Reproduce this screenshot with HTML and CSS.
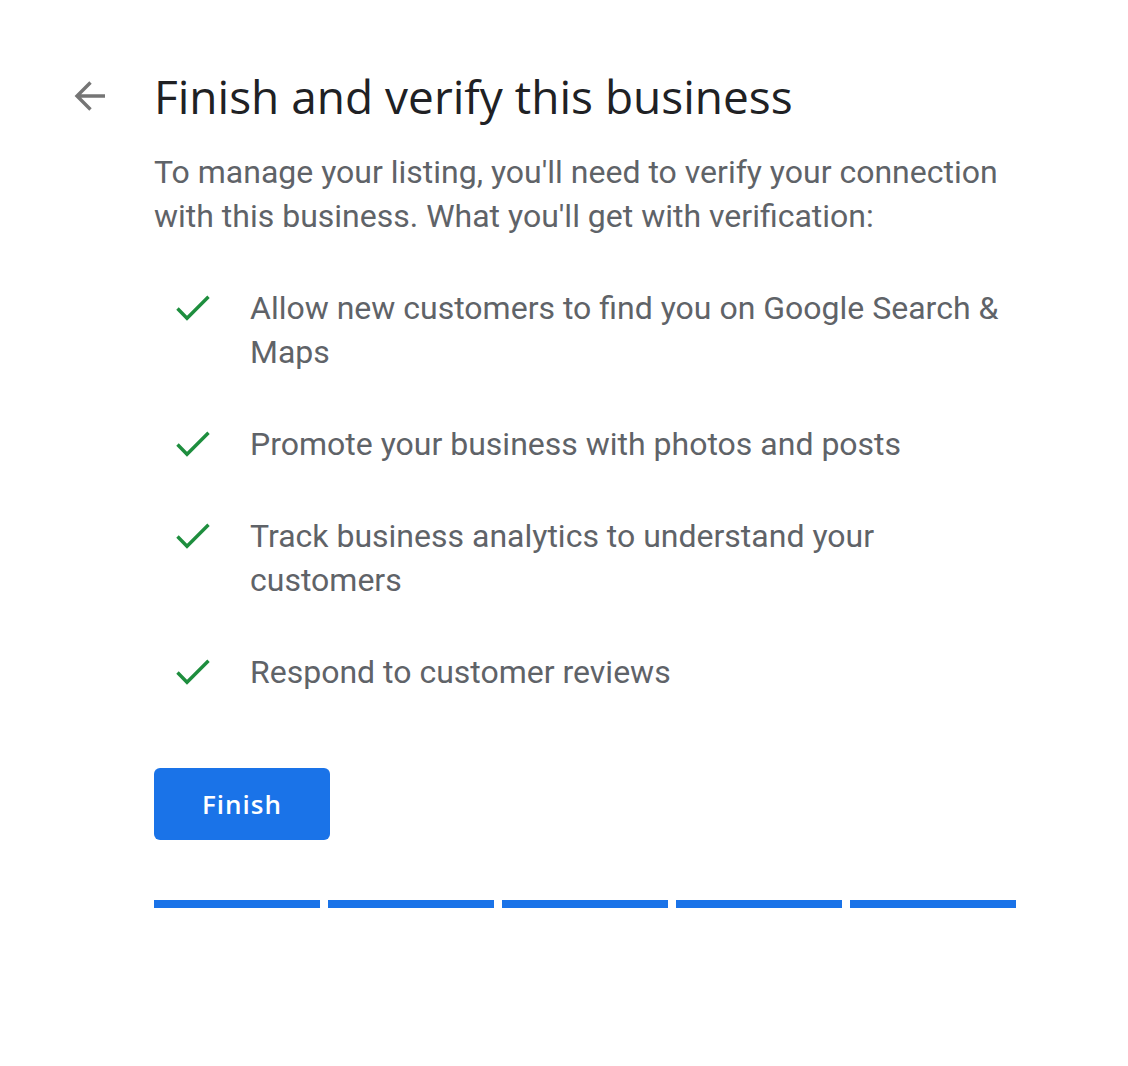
FILE: index.html
```html
<!DOCTYPE html>
<html lang="en">
<head>
  <meta charset="UTF-8">
  <title>Finish and verify this business</title>
  <link rel="stylesheet" href="styles.css">
</head>
<body>
  <div class="page">
    <!-- back arrow -->
    <button class="back" type="button" aria-label="Back">
      <svg width="32" height="32" viewBox="0 0 32 32"><path d="M31 16H3M16.5 2.5L3 16l13.5 13.5" fill="none" stroke="#757575" stroke-width="3.4"/></svg>
    </button>

    <main class="content">
      <h1 class="title">Finish and verify this business</h1>
      <p class="intro">To manage your listing, you'll need to verify your connection with this business. What you'll get with verification:</p>

      <ul class="perks">
        <li>
          <svg class="check" width="34" height="26" viewBox="0 0 34 26"><path d="M1.5 13.5l9.5 9.8L32.5 1.8" fill="none" stroke="#1e8e3e" stroke-width="3.4"/></svg>
          <span>Allow new customers to find you on Google Search &amp; Maps</span>
        </li>
        <li>
          <svg class="check" width="34" height="26" viewBox="0 0 34 26"><path d="M1.5 13.5l9.5 9.8L32.5 1.8" fill="none" stroke="#1e8e3e" stroke-width="3.4"/></svg>
          <span>Promote your business with photos and posts</span>
        </li>
        <li>
          <svg class="check" width="34" height="26" viewBox="0 0 34 26"><path d="M1.5 13.5l9.5 9.8L32.5 1.8" fill="none" stroke="#1e8e3e" stroke-width="3.4"/></svg>
          <span>Track business analytics to understand your customers</span>
        </li>
        <li>
          <svg class="check" width="34" height="26" viewBox="0 0 34 26"><path d="M1.5 13.5l9.5 9.8L32.5 1.8" fill="none" stroke="#1e8e3e" stroke-width="3.4"/></svg>
          <span>Respond to customer reviews</span>
        </li>
      </ul>

      <button class="finish" type="button">Finish</button>

      <div class="progress">
        <div class="step"></div>
        <div class="step"></div>
        <div class="step"></div>
        <div class="step"></div>
        <div class="step"></div>
      </div>
    </main>
  </div>
</body>
</html>
```

FILE: styles.css
```css
body {
  margin: 0;
  background: #fff;
  font-family: Roboto, "Liberation Sans", sans-serif;
}

.page {
  display: flex;
  align-items: flex-start;
  padding: 74px 0 0 74px;
}

.back {
  display: flex;
  width: 80px;
  padding: 0;
  margin: 6px 0 0 0;
  border: 0;
  background: none;
  cursor: pointer;
}

.content {
  width: 862px;
}

.title {
  margin: 0;
  font-family: "Open Sans", Roboto, sans-serif;
  font-weight: 400;
  font-size: 46px;
  line-height: 44px;
  color: #202124;
}

.intro {
  margin: 32px 0 0 0;
  font-size: 32px;
  line-height: 44px;
  color: #5f6368;
}

.perks {
  list-style: none;
  margin: 48px 0 0 0;
  padding: 0;
  display: flex;
  flex-direction: column;
  gap: 48px;
}

.perks li {
  display: flex;
  align-items: flex-start;
  font-size: 32px;
  line-height: 44px;
  color: #5f6368;
}

.check {
  flex: none;
  margin: 9px 40px 0 22px;
}

.finish {
  display: block;
  margin-top: 74px;
  width: 176px;
  height: 72px;
  border: 0;
  border-radius: 6px;
  background: #1a73e8;
  color: #fff;
  font-family: "Open Sans", Roboto, sans-serif;
  font-size: 26px;
  font-weight: 600;
  letter-spacing: 1px;
  cursor: pointer;
}

.progress {
  display: flex;
  gap: 8px;
  margin-top: 60px;
}

.step {
  flex: 1;
  height: 8px;
  background: #1a73e8;
}
```
